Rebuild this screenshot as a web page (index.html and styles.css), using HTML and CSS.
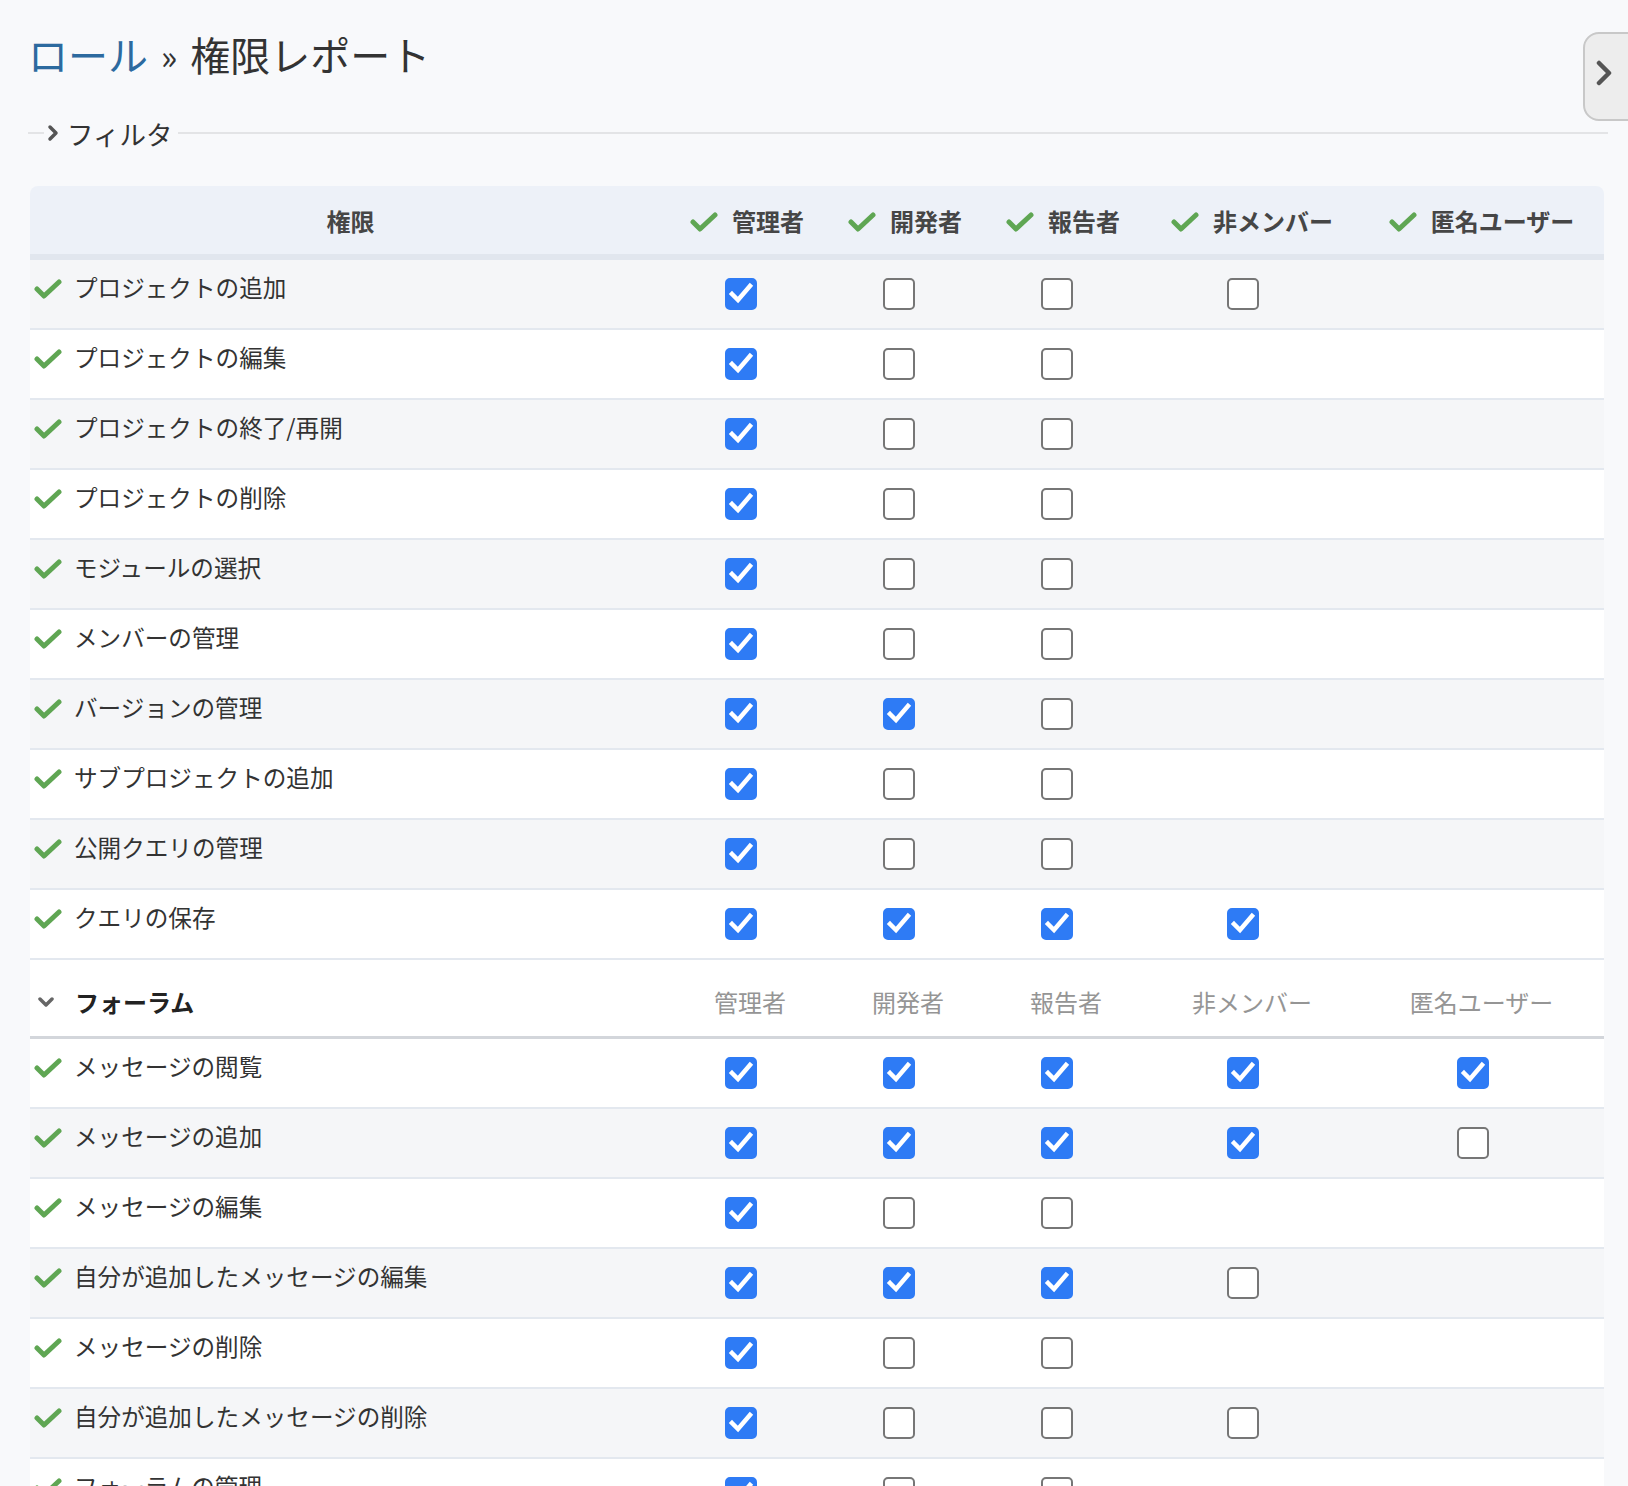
FILE: index.html
```html
<!DOCTYPE html>
<html lang="ja">
<head>
<meta charset="utf-8">
<title>ロール » 権限レポート</title>
<link rel="stylesheet" href="styles.css">
</head>
<body>
<div class="page">
  <a class="sidebar-toggle" href="#"><svg width="16" height="26" viewBox="0 0 16 26"><polyline points="3,3 13,13 3,23" fill="none" stroke="#555" stroke-width="4.5" stroke-linecap="round" stroke-linejoin="round"/></svg></a>

  <h2 class="title"><a class="crumb" href="#">ロール</a><span class="sep">»</span>権限レポート</h2>

  <div class="filter">
    <span class="filter-line lead"></span>
    <span class="legend"><svg class="legend-icon" width="12" height="18" viewBox="0 0 12 18"><polyline points="3,3 9,9 3,15" fill="none" stroke="#555" stroke-width="3.5" stroke-linecap="round" stroke-linejoin="round"/></svg>フィルタ</span>
    <span class="filter-line rest"></span>
  </div>

  <table class="perm">
    <colgroup>
      <col class="c-name"><col class="c-role"><col class="c-role"><col class="c-role"><col class="c-non"><col class="c-anon">
    </colgroup>
    <thead>
      <tr>
        <th>権限</th>
        <th class="role"><svg class="ok" viewBox="0 0 28 20"><polyline points="3,10 10,17 25,3"/></svg>管理者</th>
        <th class="role"><svg class="ok" viewBox="0 0 28 20"><polyline points="3,10 10,17 25,3"/></svg>開発者</th>
        <th class="role"><svg class="ok" viewBox="0 0 28 20"><polyline points="3,10 10,17 25,3"/></svg>報告者</th>
        <th><svg class="ok" viewBox="0 0 28 20"><polyline points="3,10 10,17 25,3"/></svg>非メンバー</th>
        <th><svg class="ok" viewBox="0 0 28 20"><polyline points="3,10 10,17 25,3"/></svg>匿名ユーザー</th>
      </tr>
    </thead>
    <tbody>
      <tr class="alt">
        <td class="name"><svg class="ok" viewBox="0 0 28 20"><polyline points="3,10 10,17 25,3"/></svg>プロジェクトの追加</td>
        <td><span class="cb on"><svg viewBox="0 0 32 32"><polyline points="7,16 13,22 25,8"/></svg></span></td>
        <td><span class="cb"></span></td>
        <td><span class="cb"></span></td>
        <td><span class="cb"></span></td>
        <td></td>
      </tr>
      <tr>
        <td class="name"><svg class="ok" viewBox="0 0 28 20"><polyline points="3,10 10,17 25,3"/></svg>プロジェクトの編集</td>
        <td><span class="cb on"><svg viewBox="0 0 32 32"><polyline points="7,16 13,22 25,8"/></svg></span></td>
        <td><span class="cb"></span></td>
        <td><span class="cb"></span></td>
        <td></td>
        <td></td>
      </tr>
      <tr class="alt">
        <td class="name"><svg class="ok" viewBox="0 0 28 20"><polyline points="3,10 10,17 25,3"/></svg>プロジェクトの終了/再開</td>
        <td><span class="cb on"><svg viewBox="0 0 32 32"><polyline points="7,16 13,22 25,8"/></svg></span></td>
        <td><span class="cb"></span></td>
        <td><span class="cb"></span></td>
        <td></td>
        <td></td>
      </tr>
      <tr>
        <td class="name"><svg class="ok" viewBox="0 0 28 20"><polyline points="3,10 10,17 25,3"/></svg>プロジェクトの削除</td>
        <td><span class="cb on"><svg viewBox="0 0 32 32"><polyline points="7,16 13,22 25,8"/></svg></span></td>
        <td><span class="cb"></span></td>
        <td><span class="cb"></span></td>
        <td></td>
        <td></td>
      </tr>
      <tr class="alt">
        <td class="name"><svg class="ok" viewBox="0 0 28 20"><polyline points="3,10 10,17 25,3"/></svg>モジュールの選択</td>
        <td><span class="cb on"><svg viewBox="0 0 32 32"><polyline points="7,16 13,22 25,8"/></svg></span></td>
        <td><span class="cb"></span></td>
        <td><span class="cb"></span></td>
        <td></td>
        <td></td>
      </tr>
      <tr>
        <td class="name"><svg class="ok" viewBox="0 0 28 20"><polyline points="3,10 10,17 25,3"/></svg>メンバーの管理</td>
        <td><span class="cb on"><svg viewBox="0 0 32 32"><polyline points="7,16 13,22 25,8"/></svg></span></td>
        <td><span class="cb"></span></td>
        <td><span class="cb"></span></td>
        <td></td>
        <td></td>
      </tr>
      <tr class="alt">
        <td class="name"><svg class="ok" viewBox="0 0 28 20"><polyline points="3,10 10,17 25,3"/></svg>バージョンの管理</td>
        <td><span class="cb on"><svg viewBox="0 0 32 32"><polyline points="7,16 13,22 25,8"/></svg></span></td>
        <td><span class="cb on"><svg viewBox="0 0 32 32"><polyline points="7,16 13,22 25,8"/></svg></span></td>
        <td><span class="cb"></span></td>
        <td></td>
        <td></td>
      </tr>
      <tr>
        <td class="name"><svg class="ok" viewBox="0 0 28 20"><polyline points="3,10 10,17 25,3"/></svg>サブプロジェクトの追加</td>
        <td><span class="cb on"><svg viewBox="0 0 32 32"><polyline points="7,16 13,22 25,8"/></svg></span></td>
        <td><span class="cb"></span></td>
        <td><span class="cb"></span></td>
        <td></td>
        <td></td>
      </tr>
      <tr class="alt">
        <td class="name"><svg class="ok" viewBox="0 0 28 20"><polyline points="3,10 10,17 25,3"/></svg>公開クエリの管理</td>
        <td><span class="cb on"><svg viewBox="0 0 32 32"><polyline points="7,16 13,22 25,8"/></svg></span></td>
        <td><span class="cb"></span></td>
        <td><span class="cb"></span></td>
        <td></td>
        <td></td>
      </tr>
      <tr>
        <td class="name"><svg class="ok" viewBox="0 0 28 20"><polyline points="3,10 10,17 25,3"/></svg>クエリの保存</td>
        <td><span class="cb on"><svg viewBox="0 0 32 32"><polyline points="7,16 13,22 25,8"/></svg></span></td>
        <td><span class="cb on"><svg viewBox="0 0 32 32"><polyline points="7,16 13,22 25,8"/></svg></span></td>
        <td><span class="cb on"><svg viewBox="0 0 32 32"><polyline points="7,16 13,22 25,8"/></svg></span></td>
        <td><span class="cb on"><svg viewBox="0 0 32 32"><polyline points="7,16 13,22 25,8"/></svg></span></td>
        <td></td>
      </tr>
      <tr class="group">
        <td class="name"><svg class="fold" viewBox="0 0 18 10"><polyline points="3,2 9,8 15,2"/></svg>フォーラム</td>
        <td>管理者</td>
        <td>開発者</td>
        <td>報告者</td>
        <td>非メンバー</td>
        <td>匿名ユーザー</td>
      </tr>
      <tr>
        <td class="name"><svg class="ok" viewBox="0 0 28 20"><polyline points="3,10 10,17 25,3"/></svg>メッセージの閲覧</td>
        <td><span class="cb on"><svg viewBox="0 0 32 32"><polyline points="7,16 13,22 25,8"/></svg></span></td>
        <td><span class="cb on"><svg viewBox="0 0 32 32"><polyline points="7,16 13,22 25,8"/></svg></span></td>
        <td><span class="cb on"><svg viewBox="0 0 32 32"><polyline points="7,16 13,22 25,8"/></svg></span></td>
        <td><span class="cb on"><svg viewBox="0 0 32 32"><polyline points="7,16 13,22 25,8"/></svg></span></td>
        <td><span class="cb on"><svg viewBox="0 0 32 32"><polyline points="7,16 13,22 25,8"/></svg></span></td>
      </tr>
      <tr class="alt">
        <td class="name"><svg class="ok" viewBox="0 0 28 20"><polyline points="3,10 10,17 25,3"/></svg>メッセージの追加</td>
        <td><span class="cb on"><svg viewBox="0 0 32 32"><polyline points="7,16 13,22 25,8"/></svg></span></td>
        <td><span class="cb on"><svg viewBox="0 0 32 32"><polyline points="7,16 13,22 25,8"/></svg></span></td>
        <td><span class="cb on"><svg viewBox="0 0 32 32"><polyline points="7,16 13,22 25,8"/></svg></span></td>
        <td><span class="cb on"><svg viewBox="0 0 32 32"><polyline points="7,16 13,22 25,8"/></svg></span></td>
        <td><span class="cb"></span></td>
      </tr>
      <tr>
        <td class="name"><svg class="ok" viewBox="0 0 28 20"><polyline points="3,10 10,17 25,3"/></svg>メッセージの編集</td>
        <td><span class="cb on"><svg viewBox="0 0 32 32"><polyline points="7,16 13,22 25,8"/></svg></span></td>
        <td><span class="cb"></span></td>
        <td><span class="cb"></span></td>
        <td></td>
        <td></td>
      </tr>
      <tr class="alt">
        <td class="name"><svg class="ok" viewBox="0 0 28 20"><polyline points="3,10 10,17 25,3"/></svg>自分が追加したメッセージの編集</td>
        <td><span class="cb on"><svg viewBox="0 0 32 32"><polyline points="7,16 13,22 25,8"/></svg></span></td>
        <td><span class="cb on"><svg viewBox="0 0 32 32"><polyline points="7,16 13,22 25,8"/></svg></span></td>
        <td><span class="cb on"><svg viewBox="0 0 32 32"><polyline points="7,16 13,22 25,8"/></svg></span></td>
        <td><span class="cb"></span></td>
        <td></td>
      </tr>
      <tr>
        <td class="name"><svg class="ok" viewBox="0 0 28 20"><polyline points="3,10 10,17 25,3"/></svg>メッセージの削除</td>
        <td><span class="cb on"><svg viewBox="0 0 32 32"><polyline points="7,16 13,22 25,8"/></svg></span></td>
        <td><span class="cb"></span></td>
        <td><span class="cb"></span></td>
        <td></td>
        <td></td>
      </tr>
      <tr class="alt">
        <td class="name"><svg class="ok" viewBox="0 0 28 20"><polyline points="3,10 10,17 25,3"/></svg>自分が追加したメッセージの削除</td>
        <td><span class="cb on"><svg viewBox="0 0 32 32"><polyline points="7,16 13,22 25,8"/></svg></span></td>
        <td><span class="cb"></span></td>
        <td><span class="cb"></span></td>
        <td><span class="cb"></span></td>
        <td></td>
      </tr>
      <tr>
        <td class="name"><svg class="ok" viewBox="0 0 28 20"><polyline points="3,10 10,17 25,3"/></svg>フォーラムの管理</td>
        <td><span class="cb on"><svg viewBox="0 0 32 32"><polyline points="7,16 13,22 25,8"/></svg></span></td>
        <td><span class="cb"></span></td>
        <td><span class="cb"></span></td>
        <td></td>
        <td></td>
      </tr>
    </tbody>
  </table>
</div>
</body>
</html>
```
FILE: styles.css
```css
html {
  overflow: hidden;
}
body {
  margin: 0;
  background: #f8f9fb;
  font-family: "Noto Sans CJK JP", "Noto Sans", sans-serif;
  color: #333;
}
.page {
  position: relative;
  padding: 30px 24px 0 30px;
}

/* right sidebar toggle (overlay) */
.sidebar-toggle {
  position: absolute;
  top: 32px;
  right: -20px;
  width: 65px;
  height: 89px;
  box-sizing: border-box;
  background: #ededed;
  border: 2px solid #c8c8c8;
  border-radius: 16px;
  display: flex;
  align-items: center;
  padding: 0 0 8px 11px;
}

/* title */
.title {
  margin: 0 0 0 -2px;
  font-size: 40px;
  line-height: 48px;
  font-weight: normal;
  color: #333;
}
.crumb {
  color: #2c6a9f;
  text-decoration: none;
}
.sep {
  margin: 0 13px 0 13px;
  font-size: 34px;
  line-height: 1;
  vertical-align: 1px;
}

/* filter legend line */
.filter {
  display: flex;
  align-items: center;
  height: 36px;
  margin: 37px -4px 35px -2px;
}
.filter-line {
  height: 2px;
  background: #e3e4e6;
}
.filter-line.lead {
  width: 16px;
}
.filter-line.rest {
  flex: 1;
}
.legend {
  display: flex;
  align-items: center;
  padding: 0 6px 0 3px;
  font-size: 26.5px;
  color: #333;
}
.legend-icon {
  margin-right: 8px;
}

/* permissions table */
.perm {
  width: 1574px;
  table-layout: fixed;
  border-collapse: separate;
  border-spacing: 0;
  font-size: 24px;
}
.c-name { width: 641px; }
.c-role { width: 158px; }
.c-non { width: 214px; }
.c-anon { width: 245px; }

.perm th {
  height: 68px;
  padding: 0;
  background: #edf1f8;
  border-bottom: 6px solid #e1e6ee;
  color: #464646;
  font-weight: bold;
  text-align: center;
  white-space: nowrap;
}
.perm th.role {
  padding-right: 6px;
}
.perm th:first-child {
  border-top-left-radius: 8px;
}
.perm th:last-child {
  border-top-right-radius: 8px;
}
.perm th .ok {
  margin-right: 14px;
}

.ok {
  width: 28px;
  height: 20px;
  vertical-align: middle;
  position: relative;
  top: -2px;
  fill: none;
  stroke: #5fa653;
  stroke-width: 5;
  stroke-linecap: round;
  stroke-linejoin: round;
}

.perm td {
  height: 68px;
  padding: 0;
  background: #fff;
  border-bottom: 2px solid #e3e8ef;
  text-align: center;
  vertical-align: middle;
  white-space: nowrap;
}
.perm tr.alt td {
  background: #f5f6f8;
}
.perm td.name {
  text-align: left;
  height: 54px;
  padding: 0 0 14px 4px;
  font-size: 23.6px;
}
.perm td.name .ok {
  margin-right: 12px;
}

.cb {
  display: block;
  width: 32px;
  height: 32px;
  box-sizing: border-box;
  border: 2px solid #767676;
  border-radius: 5px;
  background: #fff;
  margin-left: calc(50% - 25px);
}
.cb.on {
  background: #2e7bf5;
  border-color: #2e7bf5;
}
.cb svg {
  display: block;
  width: 32px;
  height: 32px;
  margin: -2px;
  fill: none;
  stroke: #fff;
  stroke-width: 4.5;
  stroke-linecap: square;
}

/* group row */
.perm tr.group td {
  height: 70px;
  padding: 6px 0 0;
  border-bottom: 3px solid #d3d6db;
  color: #959595;
  font-weight: normal;
}
.perm tr.group td.name {
  height: 70px;
  padding: 6px 0 0 7px;
  color: #222;
  font-weight: bold;
  font-size: 24px;
}
.fold {
  width: 18px;
  height: 10px;
  margin-right: 20px;
  vertical-align: middle;
  position: relative;
  top: -3px;
  fill: none;
  stroke: #666;
  stroke-width: 3.5;
  stroke-linecap: round;
  stroke-linejoin: round;
}
```
